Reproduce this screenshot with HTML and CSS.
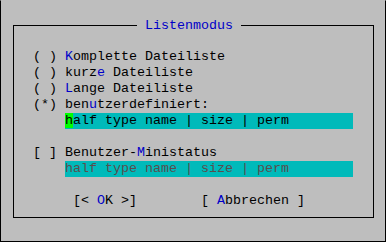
FILE: index.html
```html
<!DOCTYPE html>
<html>

<head>
  <link rel="stylesheet" href="styles.css">
</head>

<body>
  <div class="screen">
    <div class="frame">
      <div class="frame-top">
        <span class="line line-left"></span>
        <span class="title">Listenmodus</span>
        <span class="line line-right"></span>
      </div>

      <div class="frame-body">
        <div class="row">( ) <span class="hot">K</span>omplette Dateiliste</div>
        <div class="row">( ) kurz<span class="hot">e</span> Dateiliste</div>
        <div class="row">( ) <span class="hot">L</span>ange Dateiliste</div>
        <div class="row">(*) ben<span class="hot">u</span>tzerdefiniert:</div>
        <div class="row input"><span class="cursor">h</span>alf type name | size | perm</div>
        <div class="row"></div>
        <div class="row">[ ] Benutzer-<span class="hot">M</span>inistatus</div>
        <div class="row input disabled">half type name | size | perm</div>
        <div class="row"></div>
        <div class="row buttons">
          <span class="button">[&lt; <span class="hot">O</span>K &gt;]</span>
          <span class="button">[ <span class="hot">A</span>bbrechen ]</span>
        </div>
      </div>
    </div>
  </div>
</body>

</html>
```

FILE: styles.css
```css
/* Terminal window */
body {
  margin: 0;
  background-color: #bebebe;
}

.screen {
  width: 384px;
  height: 240px;
  border: 1px solid #000;
  border-top-color: #bebebe;
  background-color: #bebebe;
  font-family: "Liberation Mono", "DejaVu Sans Mono", monospace;
  font-size: 13.333px;
  line-height: 16px;
  color: #000;
  overflow: hidden;
}

/* Dialog frame */
.frame {
  margin: 24px 0 0 12px;
  width: 359px;
  height: 192px;
  border: 1px solid #000;
  border-top: none;
}

.frame-top {
  display: flex;
  align-items: center;
  height: 1px;
  margin: 0 -1px;
}

.line {
  height: 1px;
  background-color: #000;
}

.line-left {
  width: 124px;
}

.line-right {
  flex: 1;
}

.title {
  padding: 0 8px;
  color: #0000c8;
  white-space: pre;
}

.frame-body {
  padding: 23px 0 0 19px;
}

.row {
  height: 16px;
  white-space: pre;
}

.hot {
  color: #0000c8;
}

/* Input lines */
.input {
  margin-left: 32px;
  width: 288px;
  background-color: #00baba;
}

.input.disabled {
  color: #5a4e4e;
}

.cursor {
  background-color: #00ff00;
}

/* Buttons */
.buttons {
  display: flex;
  padding-left: 40px;
  gap: 64px;
}
```
